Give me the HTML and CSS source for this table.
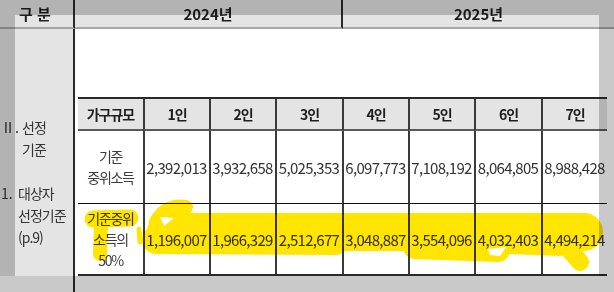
FILE: index.html
```html
<!DOCTYPE html>
<html lang="ko">
<head>
<meta charset="utf-8">
<title>선정기준</title>
<link rel="stylesheet" href="styles.css">
</head>
<body>
<div class="sheet">
  <div class="hd hd-label">구&nbsp;분</div>
  <div class="hd hd-mid">2024년</div>
  <div class="hd">2025년</div>

  <div class="side">
    <div class="item item-a"><span class="num">Ⅱ.</span><span class="lbl">선정<br>기준</span></div>
    <div class="item item-b"><span class="num">1.</span><span class="lbl">대상자<br>선정기준<br>(p.9)</span></div>
  </div>

  <div class="main">
    <div class="tbl">
      <div class="c th first">가구규모</div>
      <div class="c th">1인</div>
      <div class="c th">2인</div>
      <div class="c th">3인</div>
      <div class="c th">4인</div>
      <div class="c th">5인</div>
      <div class="c th">6인</div>
      <div class="c th">7인</div>

      <div class="c r1 first txt">기준<br>중위소득</div>
      <div class="c r1 n">2,392,013</div>
      <div class="c r1 n">3,932,658</div>
      <div class="c r1 n">5,025,353</div>
      <div class="c r1 n">6,097,773</div>
      <div class="c r1 n">7,108,192</div>
      <div class="c r1 n">8,064,805</div>
      <div class="c r1 n">8,988,428</div>

      <div class="c r2 first txt">기준중위<br>소득의<br>50%</div>
      <div class="c r2 n">1,196,007</div>
      <div class="c r2 n">1,966,329</div>
      <div class="c r2 n">2,512,677</div>
      <div class="c r2 n">3,048,887</div>
      <div class="c r2 n">3,554,096</div>
      <div class="c r2 n">4,032,403</div>
      <div class="c r2 n">4,494,214</div>
    </div>
  </div>

  <div class="foot-side"></div>
  <div class="foot-main"></div>
</div>

<svg class="marker" width="614" height="292" viewBox="0 0 614 292" aria-hidden="true">
  <g fill="none" stroke="#ffe500" stroke-linecap="round" stroke-linejoin="round">
    <path d="M166 232 L584 232" stroke-width="38"/>
    <path d="M156 240 L335 241" stroke-width="28"/>
    <path d="M415 247 L498 250" stroke-width="24"/>
    <path d="M505 244 L560 246" stroke-width="20"/>
    <path d="M568 248 L580 262" stroke-width="18"/>
    <path d="M156 222 Q166 204 186 207" stroke-width="14"/>
    <path d="M93 219 L130 218" stroke-width="17"/>
    <path d="M101 222 L100 254" stroke-width="14"/>
    <path d="M139 229 L140 242" stroke-width="5"/>
  </g>
  <g fill="#fff">
    <path d="M160 217 L174 218 L164 226 Z"/>
    <path d="M488 249 L506 247 L500 256 L490 255 Z"/>
  </g>
</svg>
<div class="shade"></div>
</body>
</html>
```

FILE: styles.css
```css
html, body {
  margin: 0;
  padding: 0;
}

body {
  position: relative;
  width: 614px;
  height: 292px;
  overflow: hidden;
  background: #ffffff;
  font-family: "Noto Sans CJK KR", "Noto Sans", sans-serif;
  color: #2e2e2e;
}

.sheet {
  display: grid;
  grid-template-columns: 75px 268px 1fr;
  grid-template-rows: 29px 247px 16px;
  width: 614px;
  height: 292px;
}

.hd {
  box-sizing: border-box;
  display: flex;
  align-items: center;
  justify-content: center;
  background: #e4e4e4;
  border-bottom: 2px solid #a6a6a6;
  font-size: 15px;
  font-weight: 700;
  color: #1e1e1e;
  padding-bottom: 1px;
}

.hd-label {
  border-right: 2px solid #2a2a2a;
  padding-right: 3px;
}

.hd-mid {
  border-right: 2px solid #2a2a2a;
}

.side {
  box-sizing: border-box;
  background: #e4e4e4;
  border-right: 2px solid #2a2a2a;
  padding-top: 87px;
  font-size: 14px;
  line-height: 22px;
  letter-spacing: -1px;
  color: #333;
}

.item {
  display: flex;
}

.item-b {
  margin-top: 22px;
}

.num {
  flex: none;
  letter-spacing: 0;
}

.item-a .num {
  width: 21px;
  padding-left: 1px;
}

.item-b .num {
  width: 17px;
  padding-left: 1px;
}

.main {
  grid-column: 2 / 4;
  padding: 68px 0 0 3px;
}

.tbl {
  display: grid;
  grid-template-columns: 65px 66px 66px 67px 66px 66px 67px 66px;
  grid-template-rows: 32px 73px 70px;
  width: 529px;
  border-top: 2px solid #2a2a2a;
  border-bottom: 2px solid #2a2a2a;
}

.c {
  box-sizing: border-box;
  display: flex;
  align-items: center;
  justify-content: center;
  text-align: center;
  border-left: 2px solid #3a3a3a;
}

.c.first {
  border-left: none;
}

.th {
  background: #e4e4e4;
  border-bottom: 2px solid #5a5a5a;
  font-size: 14px;
  font-weight: 700;
  letter-spacing: -1px;
  color: #1e1e1e;
}

.r1 {
  border-bottom: 1px solid #111;
}

.txt {
  font-size: 14px;
  line-height: 21px;
  letter-spacing: -1.3px;
  color: #3c3c3c;
}

.n {
  font-size: 15px;
  letter-spacing: -0.7px;
  color: #333;
  padding-right: 1px;
}

.foot-side {
  border-right: 2px solid #2a2a2a;
}

.marker {
  position: absolute;
  left: 0;
  top: 0;
  pointer-events: none;
  mix-blend-mode: multiply;
}

.shade {
  position: absolute;
  left: 15px;
  top: 15px;
  width: 584px;
  height: 261px;
  box-shadow: 0 0 0 800px rgba(0, 0, 0, 0.21);
  pointer-events: none;
}
```
